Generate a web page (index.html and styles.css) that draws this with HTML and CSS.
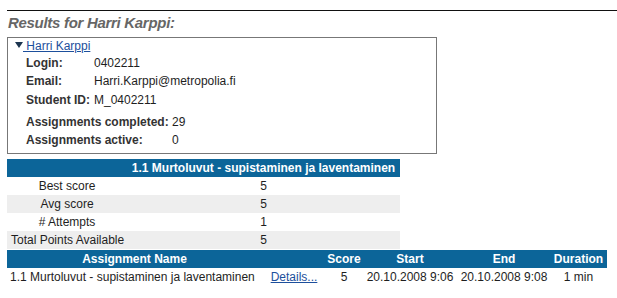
FILE: index.html
```html
<!DOCTYPE html>
<html lang="en">
<head>
  <meta charset="UTF-8" />
  <title>Results for Harri Karppi</title>
  <link rel="stylesheet" href="styles.css">
</head>
<body>
  <div class="page">
    <h2 class="results-title">Results for Harri Karppi:</h2>

    <div class="student-box">
      <div class="student-toggle">
        <span class="arrow"></span><a href="#">&nbsp;Harri Karppi</a>
      </div>
      <table class="info info-basic">
        <tr><th>Login:</th><td>0402211</td></tr>
        <tr><th>Email:</th><td>Harri.Karppi@metropolia.fi</td></tr>
        <tr><th class="nowrap">Student ID:</th><td class="tight">M_0402211</td></tr>
      </table>
      <table class="info info-count">
        <tr><th>Assignments completed:</th><td>29</td></tr>
        <tr><th>Assignments active:</th><td>0</td></tr>
      </table>
    </div>

    <table class="summary">
      <tr>
        <th class="col-label"></th>
        <th>1.1 Murtoluvut - supistaminen ja laventaminen</th>
      </tr>
      <tr><td class="col-label">Best score</td><td>5</td></tr>
      <tr class="alt"><td class="col-label">Avg score</td><td>5</td></tr>
      <tr><td class="col-label"># Attempts</td><td>1</td></tr>
      <tr class="alt"><td class="col-label left">Total Points Available</td><td>5</td></tr>
    </table>

    <table class="attempts">
      <colgroup>
        <col class="c-name"><col class="c-link"><col class="c-score">
        <col class="c-start"><col class="c-end"><col class="c-dur">
      </colgroup>
      <tr>
        <th>Assignment Name</th>
        <th></th>
        <th>Score</th>
        <th>Start</th>
        <th>End</th>
        <th>Duration</th>
      </tr>
      <tr>
        <td class="name">1.1 Murtoluvut - supistaminen ja laventaminen</td>
        <td><a href="#">Details...</a></td>
        <td>5</td>
        <td>20.10.2008 9:06</td>
        <td>20.10.2008 9:08</td>
        <td>1 min</td>
      </tr>
    </table>
  </div>
</body>
</html>
```

FILE: styles.css
```css
* {
  box-sizing: border-box;
  margin: 0;
  padding: 0;
}

html, body {
  background: #fff;
  font-family: "Liberation Sans", Arial, Helvetica, sans-serif;
  font-size: 12px;
  color: #1e1e1e;
}

body {
  padding-top: 10px;
}

.page {
  margin-left: 7px;
  border-top: 1px solid #111;
}

.results-title {
  margin-top: 2px;
  font-size: 15px;
  line-height: 20px;
  font-style: italic;
  font-weight: bold;
  color: #666;
  padding-left: 1px;
  letter-spacing: -0.3px;
}

.student-box {
  margin-top: 4px;
  width: 430px;
  height: 117px;
  border: 1px solid #777;
  padding: 1px 5px 0 5px;
}

.student-toggle {
  line-height: 14px;
  height: 15px;
}

.student-toggle a {
  color: #1d4f9c;
}

.arrow {
  display: inline-block;
  width: 0;
  height: 0;
  border-left: 4px solid transparent;
  border-right: 4px solid transparent;
  border-top: 6px solid #1c3550;
  margin-left: 2px;
  vertical-align: 2px;
}

.info {
  border-collapse: collapse;
  margin-left: 13px;
}

.info th {
  text-align: left;
  font-weight: bold;
  color: #333;
  padding: 0;
  height: 18px;
  white-space: nowrap;
}

.info td {
  padding: 0;
  height: 18px;
}

.info-basic th {
  width: 68px;
}

.info-basic th.nowrap {
  width: auto;
  padding-right: 4px;
}

.info-basic tr:last-child th,
.info-basic tr:last-child td {
  height: 20px;
}

.info-count {
  margin-top: 3px;
}

.info-count th {
  width: 146px;
}

.summary {
  margin-top: 5px;
  width: 393px;
  border-collapse: collapse;
  table-layout: fixed;
}

.summary th {
  background: #0c6599;
  color: #fff;
  font-weight: bold;
  height: 18px;
  padding: 0;
  text-align: center;
  white-space: nowrap;
}

.summary td {
  height: 18px;
  padding: 0;
  text-align: center;
}

.summary .col-label {
  width: 120px;
}

.summary td.left {
  text-align: left;
  padding-left: 4px;
  white-space: nowrap;
}

.summary tr.alt td {
  background: #eeeeee;
}

.attempts {
  margin-top: 1px;
  width: 600px;
  border-collapse: collapse;
  table-layout: fixed;
}

.c-name { width: 255px; }
.c-link { width: 64px; }
.c-score { width: 36px; }
.c-start { width: 96px; }
.c-end { width: 92px; }
.c-dur { width: 57px; }

.attempts th {
  background: #0c6599;
  color: #fff;
  font-weight: bold;
  height: 18px;
  padding: 0;
  text-align: center;
  white-space: nowrap;
}

.attempts td {
  height: 18px;
  padding: 0;
  text-align: center;
  white-space: nowrap;
}

.attempts td.name {
  text-align: left;
  padding-left: 3px;
}

.attempts a {
  color: #1d4f9c;
}
```
